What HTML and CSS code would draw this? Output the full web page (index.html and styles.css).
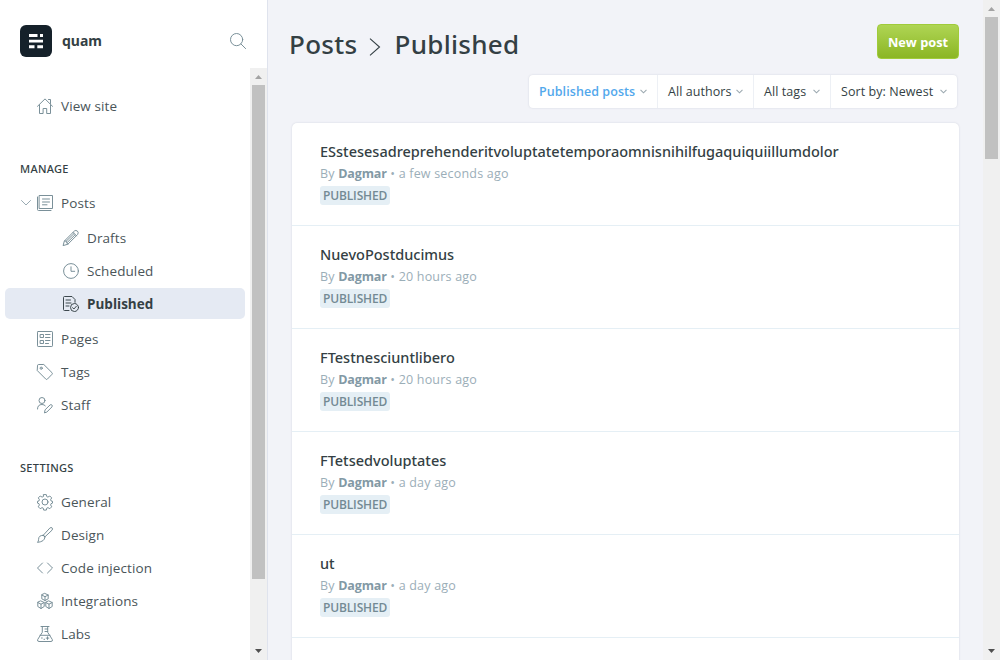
FILE: index.html
```html
<!DOCTYPE html>
<html lang="en">
<head>
<meta charset="utf-8">
<title>Posts - quam</title>
<link rel="stylesheet" href="styles.css">
</head>
<body>
<div class="app">
  <aside class="sidebar">
    <header class="brand">
      <svg class="logo" viewBox="0 0 32 32"><rect width="32" height="32" rx="6" fill="#15212a"/><path fill="#fff" d="M9 9h8.500v3H9zM20 9h3v3h-3zM9 14.700h14v2.800H9zM9 20.200h5.500v3H9zM17.300 20.200H23v3h-5.700z"/></svg>
      <span class="brand-name">quam</span>
      <svg class="icon search" viewBox="0 0 16 16"><circle cx="6.600" cy="6.600" r="6.100"/><path d="M11 11l4.600 4.600"/></svg>
    </header>
    <div class="side-body">
      <nav class="menu">
        <a class="item"><svg class="icon" viewBox="0 0 16 16"><path d="M.5 8.300L8 .9l7.500 7.400M2.500 7v8.500h3.600V10.500h3.600v5h3.800V7M11.500 1.500h2v4"/></svg><span>View site</span></a>
        <h5>Manage</h5>
        <a class="item parent"><svg class="icon caret" viewBox="0 0 10 6"><path d="M.5.5L5 5 9.500.5"/></svg><svg class="icon" viewBox="0 0 16 16"><path d="M2.500.5h13v13h-13zM.5 2v12.500q0 1 1 1H14M5.500 4h7M5.500 7h7M5.500 9.800h4.500"/></svg><span>Posts</span></a>
        <div class="submenu">
          <a class="item"><svg class="icon" viewBox="0 0 16 16"><path d="M1.600 10.800L11.400 1q1.500-1.200 3 .1t.3 3.300L4.900 14.200.5 15.500zM10 2.400l3.500 3.500M1.600 10.800l1.600.4.400 1.500 1.300 1.500M3.200 11.200l7.900-7.700M4.200 12.500l8-7.800"/></svg><span>Drafts</span></a>
          <a class="item"><svg class="icon" viewBox="0 0 16 16"><circle cx="8" cy="8" r="7.400"/><path d="M8 3.800v4.500h3.700"/></svg><span>Scheduled</span></a>
          <a class="item active"><svg class="icon" viewBox="0 0 16 16"><path d="M6 14.500H1.500q-1 0-1-1v-12q0-1 1-1H9l3 3v2.800M3 4h4.500M3 7h5M3 10h3"/><circle cx="11.500" cy="11.500" r="4"/><path d="M9.500 11.600l1.400 1.400 2.500-2.800"/></svg><span>Published</span></a>
        </div>
        <a class="item"><svg class="icon" viewBox="0 0 16 16"><rect x=".5" y=".5" width="15" height="15" rx=".7"/><path d="M3.500 3.500h3v3h-3zM3.500 9.500h3v3h-3zM8.500 3.500h4.500M8.500 6.500h4.500M8.500 9.500h4.500M8.500 12.500h3"/></svg><span>Pages</span></a>
        <a class="item"><svg class="icon" viewBox="0 0 16 16"><path d="M.5 1.500q0-1 1-1h5.300L15 8.700q.8.800 0 1.600l-4.600 4.800q-.8.800-1.600 0L.5 6.800z"/><circle cx="4.200" cy="4.200" r="1.100"/></svg><span>Tags</span></a>
        <a class="item"><svg class="icon" viewBox="0 0 16 16"><circle cx="5" cy="3.500" r="3"/><path d="M.5 12q0-4.500 4.500-4.500 2.200 0 3.300 1.300M7.500 15.500l.6-2.700 5-4.900q1-.7 1.800.1t.1 1.900l-4.900 4.900z"/></svg><span>Staff</span></a>
        <h5>Settings</h5>
        <a class="item"><svg class="icon" viewBox="0 0 16 16"><circle cx="8" cy="8" r="3"/><path d="M6.700.6h2.600l.5 2 1.100.5 1.900-1.100 1.900 1.900-1.100 1.800.4 1.200 1.500.4v1.800l-1.500.6-.4 1.200 1.100 1.900-1.900 1.900-1.900-1.100-1.100.5-.5 2H6.700l-.5-2-1.100-.5-1.900 1.100-1.900-1.900 1.100-1.900L2 9.700.5 9.100V7.300L2 6.900l.4-1.200-1.100-1.800L3.200 2l1.900 1.100 1.100-.5z"/></svg><span>General</span></a>
        <a class="item"><svg class="icon" viewBox="0 0 16 16"><path d="M6.300 8.200L12.800 1.100q1.300-1.100 2.300-.2t-.1 2.300L8 9.800M6.300 8.200L8 9.800M6 8.400q1.700.3 1.800 1.700 0 4.400-7.300 5.300 1.200-1.300 1.100-3.100 0-4.100 4.400-3.900z"/></svg><span>Design</span></a>
        <a class="item"><svg class="icon" viewBox="0 0 16 16"><path d="M5.500 3L.5 8l5 5M10.500 3l5 5-5 5"/></svg><span>Code injection</span></a>
        <a class="item"><svg class="icon" viewBox="0 0 16 16"><path d="M8 .5l3.200 1.500v3.800L8 7.500 4.800 5.800V2zM4.800 2L8 3.700 11.200 2M8 3.700v3.800M4 8l3.200 1.500v4L4 15.500.8 13.500v-4zM.8 9.500L4 11.200l3.200-1.700M4 11.200v4.300M12 8l3.200 1.500v4L12 15.500l-3.200-2v-4zM8.800 9.500l3.200 1.700 3.200-1.700M12 11.200v4.300"/></svg><span>Integrations</span></a>
        <a class="item"><svg class="icon" viewBox="0 0 16 16"><path d="M4 .5h8M5.300.5v5.800L.7 13.500q-.7 2 1.300 2h12q2 0 1.300-2l-4.600-7.200V.5M3 9.300h10M8 3h2.700M8 5.500h2.700M4.500 12h.8M10.500 10.800v2.600M9.200 12.100h2.600M7 13.300h.6"/></svg><span>Labs</span></a>
      </nav>
      <div class="scrollbar side-scroll"><i class="arrow up"></i><i class="thumb"></i><i class="arrow down"></i></div>
    </div>
  </aside>
  <main class="content">
    <header class="top">
      <h2>Posts<svg class="crumb" viewBox="0 0 12 18"><path d="M1 .7L10.500 9 1 17.300"/></svg><span class="here">Published</span></h2>
      <button class="new">New post</button>
    </header>
    <div class="filters">
      <div class="filter on"><span>Published posts</span><svg viewBox="0 0 8 5"><path d="M.6.6L4 4 7.400.6"/></svg></div>
      <div class="filter f2"><span>All authors</span><svg viewBox="0 0 8 5"><path d="M.6.6L4 4 7.400.6"/></svg></div>
      <div class="filter f3"><span>All tags</span><svg viewBox="0 0 8 5"><path d="M.6.6L4 4 7.400.6"/></svg></div>
      <div class="filter f4"><span>Sort by: Newest</span><svg viewBox="0 0 8 5"><path d="M.6.6L4 4 7.400.6"/></svg></div>
    </div>
    <section class="posts">
      <article><h3>ESstesesadreprehenderitvoluptatetemporaomnisnihilfugaquiquiillumdolor</h3><p>By <b>Dagmar</b> • a few seconds ago</p><span class="badge">Published</span></article>
      <article><h3>NuevoPostducimus</h3><p>By <b>Dagmar</b> • 20 hours ago</p><span class="badge">Published</span></article>
      <article><h3>FTestnesciuntlibero</h3><p>By <b>Dagmar</b> • 20 hours ago</p><span class="badge">Published</span></article>
      <article><h3>FTetsedvoluptates</h3><p>By <b>Dagmar</b> • a day ago</p><span class="badge">Published</span></article>
      <article><h3>ut</h3><p>By <b>Dagmar</b> • a day ago</p><span class="badge">Published</span></article>
      <article></article>
    </section>
  </main>
  <div class="scrollbar main-scroll"><i class="arrow up"></i><i class="thumb"></i><i class="arrow down"></i></div>
</div>
</body>
</html>
```
FILE: styles.css
```css
* { box-sizing: border-box; }
body { margin: 0; font-family: "Noto Sans", "Open Sans", sans-serif; color: #343f44; background: #f2f3f8; overflow: hidden; }
h2, h3, h5, p { margin: 0; }
.app { display: flex; height: 660px; overflow: hidden; }
.sidebar { display: flex; flex-direction: column; width: 268px; flex: none; background: #fff; border-right: 1px solid #dfe3ed; }
.brand { display: flex; align-items: center; height: 68px; padding: 14px 21px 0 20px; flex: none; }
.logo { width: 32px; height: 32px; }
.brand-name { margin-left: 10px; padding-bottom: 2px; font-size: 14px; font-weight: 700; letter-spacing: 0; flex: 1; }
.icon { width: 16px; height: 16px; flex: none; fill: none; stroke: #738a94; stroke-width: .95; stroke-linecap: round; stroke-linejoin: round; overflow: visible; }
.side-body { display: flex; flex: 1; min-height: 0; }
.menu { flex: 1; padding: 22px 5px 0; overflow: hidden; }
.item { display: flex; align-items: center; height: 31px; margin-bottom: 2px; padding-left: 32px; border-radius: 5px; font-family: "Open Sans", sans-serif; font-size: 13.5px; letter-spacing: .1px; color: #4a5559; white-space: nowrap; }
.item span { margin-left: 8px; }
.item.parent { padding-left: 16px; margin-bottom: 4px; }
.caret { width: 10px; height: 6px; margin-right: 6px; stroke: #9aabb3; stroke-width: 1; }
.submenu { margin-bottom: 4px; }
.submenu .item { padding-left: 58px; }
.item.active { background: #e5eaf3; color: #343f44; font-weight: 700; letter-spacing: 0; }
.active .icon { stroke: #343f44; }
.menu h5 { height: 18px; margin: 39px 0 9px 15px; font-size: 11px; line-height: 18px; font-weight: 500; letter-spacing: .3px; text-transform: uppercase; }
.scrollbar { display: flex; flex-direction: column; align-items: center; width: 17px; flex: none; background: #f0f0f0; }
.arrow { width: 7px; height: 4px; flex: none; background: #505050; clip-path: polygon(0 0, 100% 0, 50% 100%); }
.arrow.up { background: #a3a3a3; clip-path: polygon(50% 0, 100% 100%, 0 100%); margin: 7px 0 6px; }
.arrow.down { margin: auto 0 7px; }
.thumb { width: 13px; background: #c1c1c1; }
.side-scroll .thumb { height: 494px; }
.main-scroll .thumb { height: 142px; }
.content { flex: 1; min-width: 0; padding: 24px 24px 0; }
.top { display: flex; justify-content: space-between; height: 50px; }
.top h2 { display: flex; align-items: center; height: 40px; margin-left: -3px; font-size: 26px; font-weight: 500; letter-spacing: .3px; white-space: nowrap; }
.crumb { width: 12px; height: 18px; margin: 5px 13px 0 12px; fill: none; stroke: #343f44; stroke-width: 1.1; }
.new { width: 82px; height: 35px; padding: 0; border: 1px solid #a0cb3a; border-radius: 4px; background: linear-gradient(#afd554, #8bb624); color: #fff; font: 700 12.8px "Open Sans", sans-serif; white-space: nowrap; }
.filters { display: flex; width: 428px; height: 33px; margin: 1px 2px 15px auto; background: #fff; border-radius: 4px; box-shadow: 0 0 2px rgba(60,80,110,.18); font-family: "Open Sans", sans-serif; font-size: 12.5px; letter-spacing: .07px; white-space: nowrap; }
.filter { display: flex; align-items: center; justify-content: space-between; padding: 0 10px; width: 127px; border-left: 1px solid #edf0f5; }
.filter svg { width: 7px; height: 5px; fill: none; stroke: #9ba8af; stroke-width: 1.2; flex: none; }
.filter.on { width: 128px; border: 0; color: #52a8ec; font-weight: 600; }
.f2 { width: 96px; }
.f3 { width: 77px; }
.posts { height: 600px; background: #fff; border-radius: 5px; box-shadow: 0 0 2px rgba(60,80,110,.18); }
article { height: 103px; padding: 18px 28px 0; border-bottom: 1px solid #e5eff5; }
article h3 { height: 23px; font-size: 14.5px; line-height: 20px; font-weight: 500; white-space: nowrap; }
article p { height: 22px; font-family: "Open Sans", sans-serif; font-size: 12.5px; letter-spacing: .2px; line-height: 20px; color: #9baeb8; }
article b { font-weight: 700; color: #8299a5; letter-spacing: -.12px; }
.badge { display: block; width: 70px; height: 19px; padding-left: 3px; border-radius: 3px; background: #e5eff5; font-family: "Open Sans", sans-serif; font-size: 12px; letter-spacing: -.15px; line-height: 19px; font-weight: 600; color: #738a94; text-transform: uppercase; }
```
